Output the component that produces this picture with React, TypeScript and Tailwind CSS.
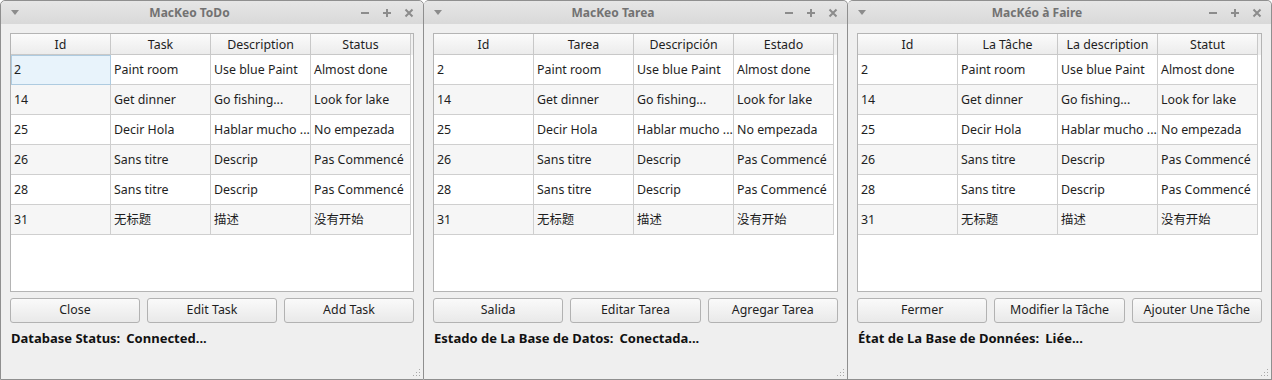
import React from 'react'

type Win = {
  title: string
  headers: string[]
  buttons: string[]
  statusLabel: string
  statusValue: string
  selected?: boolean
}

const rows = [
  ['2', 'Paint room', 'Use blue Paint', 'Almost done'],
  ['14', 'Get dinner', 'Go fishing...', 'Look for lake'],
  ['25', 'Decir Hola', 'Hablar mucho ...', 'No empezada'],
  ['26', 'Sans titre', 'Descrip', 'Pas Commencé'],
  ['28', 'Sans titre', 'Descrip', 'Pas Commencé'],
  ['31', '无标题', '描述', '没有开始'],
]

const windows: Win[] = [
  {
    title: 'MacKeo ToDo',
    headers: ['Id', 'Task', 'Description', 'Status'],
    buttons: ['Close', 'Edit Task', 'Add Task'],
    statusLabel: 'Database Status:',
    statusValue: 'Connected...',
    selected: true,
  },
  {
    title: 'MacKeo Tarea',
    headers: ['Id', 'Tarea', 'Descripción', 'Estado'],
    buttons: ['Salida', 'Editar Tarea', 'Agregar Tarea'],
    statusLabel: 'Estado de La Base de Datos:',
    statusValue: 'Conectada...',
  },
  {
    title: 'MacKéo à Faire',
    headers: ['Id', 'La Tâche', 'La description', 'Statut'],
    buttons: ['Fermer', 'Modifier la Tâche', 'Ajouter Une Tâche'],
    statusLabel: 'État de La Base de Données:',
    statusValue: 'Liée...',
  },
]

function TitleBar({ title }: { title: string }) {
  return (
    <div className="flex h-[23px] items-center rounded-t-[5px] bg-gradient-to-b from-[#e6e6e6] to-[#d9d9d9] pl-[10px] pr-[9px]">
      {/* window menu arrow */}
      <svg width="8" height="5" viewBox="0 0 8 5">
        <path d="M0 0h8L4 5z" fill="#8c8c8c" />
      </svg>
      <span className="flex-1 text-center text-[12px] font-bold text-[#727272]">{title}</span>
      <div className="flex items-center gap-[12px]">
        <svg width="10" height="10" viewBox="0 0 10 10">
          <path d="M1 5h8" stroke="#8c8c8c" strokeWidth="2" />
        </svg>
        <svg width="10" height="10" viewBox="0 0 10 10">
          <path d="M1 5h8M5 1v8" stroke="#8c8c8c" strokeWidth="2" />
        </svg>
        <svg width="10" height="10" viewBox="0 0 10 10">
          <path d="M1.5 1.5l7 7M8.5 1.5l-7 7" stroke="#8c8c8c" strokeWidth="2" />
        </svg>
      </div>
    </div>
  )
}

function Table({ headers, selected }: { headers: string[]; selected?: boolean }) {
  return (
    <div className="flex h-[259px] flex-col border border-[#b4b4b4] bg-white">
      <div className="flex h-[21px] bg-[#f0f0f0]">
        {headers.map((h, i) => (
          <div
            key={i}
            className="flex w-[100px] items-center justify-center border-r border-b border-[#c8c8c8] bg-gradient-to-b from-[#fbfbfb] to-[#ececec] pt-[2px] text-[12.4px] text-[#1e1e1e]"
          >
            {h}
          </div>
        ))}
      </div>
      {rows.map((r, ri) => (
        <div key={ri} className={`flex h-[30px] w-[400px] ${ri % 2 === 1 ? 'bg-[#f6f6f6]' : 'bg-white'}`}>
          {r.map((c, ci) => (
            <div
              key={ci}
              className={`flex w-[100px] items-center overflow-hidden whitespace-nowrap border-r border-b border-[#cfcfcf] pl-[3px] pt-[2px] text-[12.4px] text-[#1e1e1e] ${
                selected && ri === 0 && ci === 0 ? 'bg-[#e8f3fb] outline outline-1 -outline-offset-1 outline-[#aecbe0]' : ''
              }`}
            >
              {c}
            </div>
          ))}
        </div>
      ))}
    </div>
  )
}

function Window({ w, first }: { w: Win; first?: boolean }) {
  return (
    <div
      className={`flex h-[380px] w-[424px] flex-col rounded-t-[5px] border-t border-r border-b border-[#8f8f8f] bg-[#efefef] ${
        first ? 'border-l' : ''
      }`}
    >
      <TitleBar title={w.title} />
      <div className="relative flex flex-1 flex-col px-[9px] pt-[9px]">
        <Table headers={w.headers} selected={w.selected} />
        <div className="mt-[6px] flex gap-[7px]">
          {w.buttons.map((b, i) => (
            <button
              key={i}
              className="flex h-[25px] w-[131px] items-center justify-center rounded-[3px] border border-[#b2b2b2] bg-gradient-to-b from-[#fafafa] to-[#e9e9e9] text-[12.4px] text-[#1e1e1e]"
            >
              {b}
            </button>
          ))}
        </div>
        <div className="mt-[6px] flex gap-[6px] pl-[1px] text-[13px] font-bold text-[#111]">
          <span>{w.statusLabel}</span>
          <span>{w.statusValue}</span>
        </div>
        {/* size grip */}
        <svg className="absolute bottom-[2px] right-[2px]" width="10" height="10" viewBox="0 0 10 10">
          {[
            [8, 2], [8, 5], [5, 5], [8, 8], [5, 8], [2, 8],
          ].map(([x, y], i) => (
            <rect key={i} x={x} y={y} width="1" height="1" fill="#a8a8a8" />
          ))}
        </svg>
      </div>
    </div>
  )
}

export default function App() {
  return (
    <div
      className="flex h-[380px] w-[1272px] bg-white"
      style={{ fontFamily: '"Noto Sans", "Noto Sans CJK SC", sans-serif' }}
    >
      {windows.map((w, i) => (
        <Window key={i} w={w} first={i === 0} />
      ))}
    </div>
  )
}
